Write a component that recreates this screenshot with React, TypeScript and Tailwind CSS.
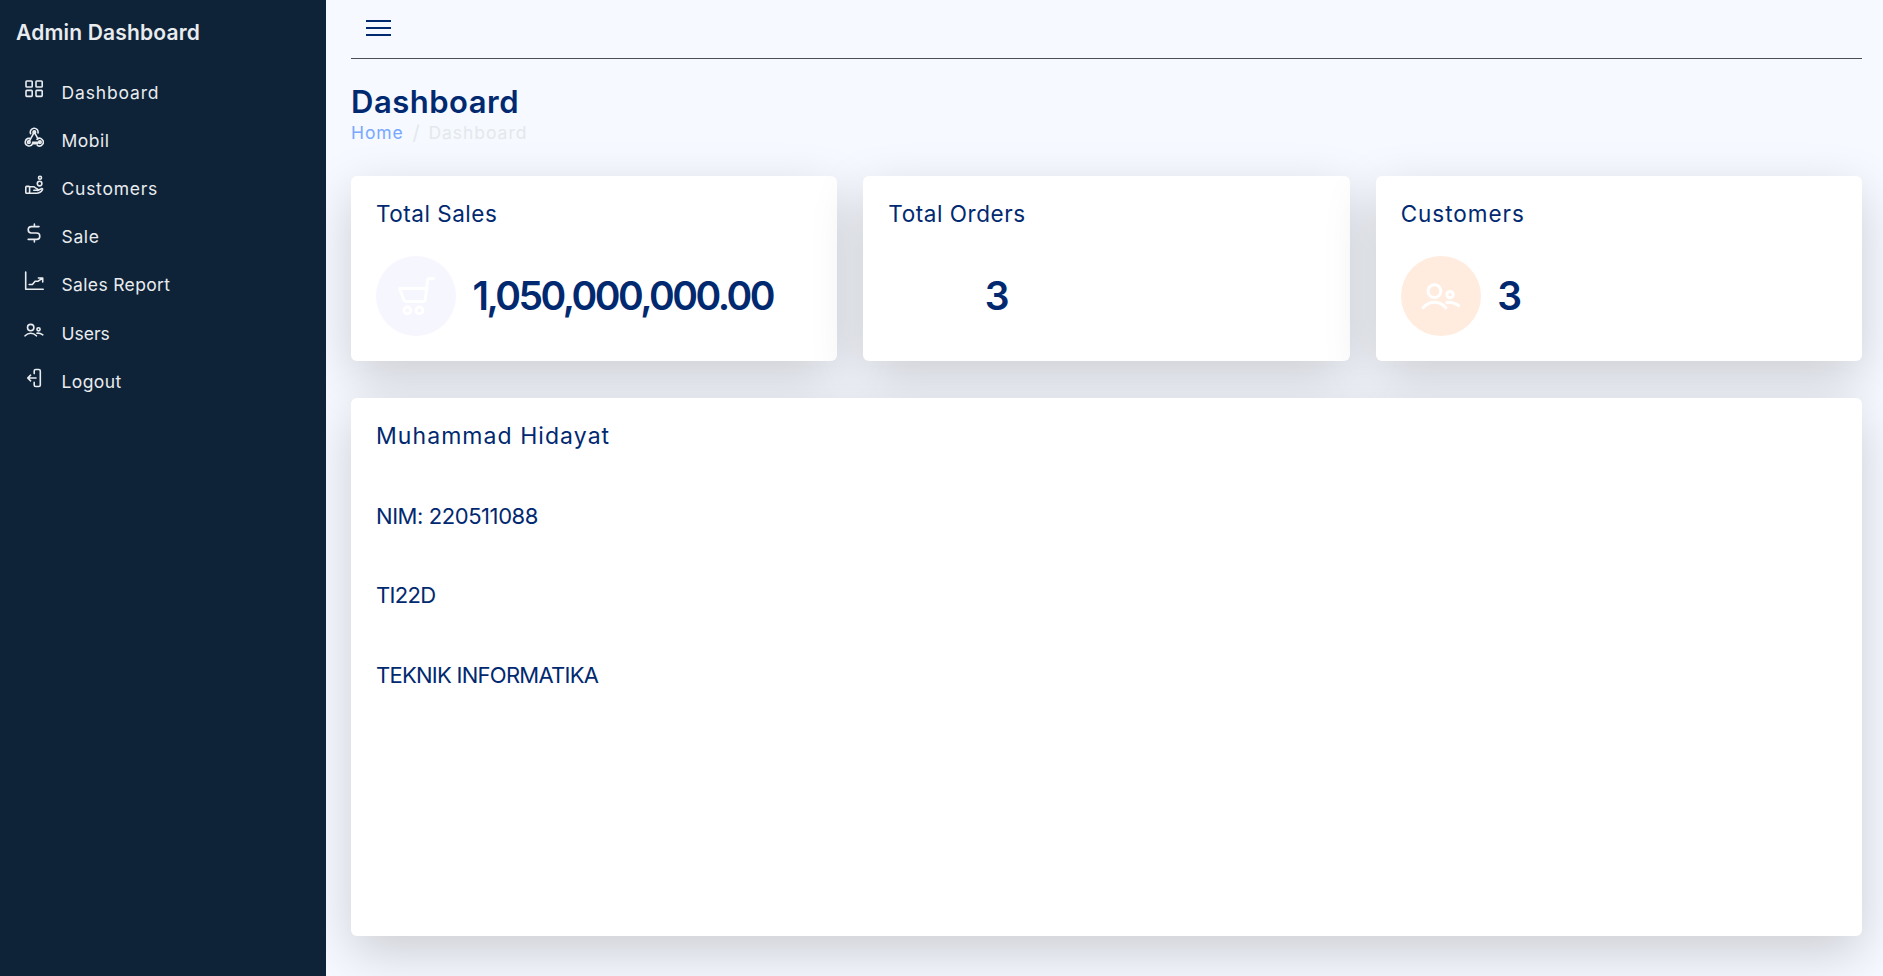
import type { ReactNode } from "react";

function Icon({ size, stroke = 1.4, children }: { size: string; stroke?: number; children: ReactNode }) {
  return (
    <svg
      viewBox="0 0 20 20"
      className={size}
      fill="none"
      stroke="currentColor"
      strokeWidth={stroke}
      strokeLinecap="round"
      strokeLinejoin="round"
      aria-hidden="true"
    >
      {children}
    </svg>
  );
}

const gridIcon = (
  <>
    <rect x="2" y="2" width="6.2" height="6" rx="0.8" />
    <rect x="12" y="2" width="6.2" height="6" rx="0.8" />
    <rect x="2" y="11.4" width="6.2" height="6" rx="0.8" />
    <rect x="12" y="11.4" width="6.2" height="6" rx="0.8" />
  </>
);

const webhookIcon = (
  <>
    <path d="M6.6 6.6a3.9 3.9 0 1 1 7.4-.6M5.6 11.4a3.8 3.8 0 1 0 3 5.2h5M13 12.3a3.8 3.8 0 1 1 .3 6" />
    <path d="M10.3 5.2l-5.5 9.9M10.3 5.2l3.6 6.5M16 15.2H8.6" />
    <circle cx="10.3" cy="5.2" r="1.3" />
    <circle cx="4.8" cy="15.2" r="1.3" />
    <circle cx="15.9" cy="15.2" r="1.3" />
  </>
);

const handCoinsIcon = (
  <>
    <rect x="1.8" y="11.4" width="3.8" height="6.9" rx="0.8" />
    <path d="M5.6 11.8h4c1.4 0 2 1.7 3.4 1.9.9.2.9 1.5-.1 1.5H9.8M5.6 18.2h6.6c3 0 5.2-1.4 6.3-3.6.4-.9-.5-1.2-1.2-.8l-3.6 1.6" />
    <circle cx="15.6" cy="8.6" r="2.3" />
    <circle cx="16" cy="2.8" r="1.5" />
  </>
);

const dollarIcon = (
  <path d="M15 3.6H7.4a3.2 3.2 0 0 0 0 6.4h5.2a3.2 3.2 0 0 1 0 6.4H4.2M10.4 1v2.4M10.4 16.6V19" />
);

const chartIcon = (
  <>
    <path d="M1.7 1v17.3h17.5" />
    <path d="M5.2 13.5h3.2l2.7-3.2h2.8l4.6-3.2M14.4 7h4.3v4" />
  </>
);

const usersIcon = (
  <>
    <circle cx="6.7" cy="7.6" r="3.2" />
    <circle cx="14.5" cy="9.3" r="1.6" />
    <path d="M1.1 15.8c3.2-3.5 8-3.5 11.3 0M12.9 13.2c2.3-.2 4 .3 5.9 1.6" />
  </>
);

const logoutIcon = (
  <path d="M10.2 5.6V3a1.5 1.5 0 0 1 1.5-1.5h3.1A1.5 1.5 0 0 1 16.3 3v14a1.5 1.5 0 0 1-1.5 1.5h-3.1a1.5 1.5 0 0 1-1.5-1.5v-2.6M12 10H3.8M6.6 7.2L3.7 10l2.9 2.8" />
);

const cartIcon = (
  <>
    <path d="M15.5 6.2H1.8L4 12.1c.2.5.4.6.9.6h8.7c.6 0 .9-.3 1-.8l1.2-9.7c.1-.7.3-1 1-1h1.9" />
    <circle cx="5.7" cy="17.2" r="1.7" />
    <circle cx="11.7" cy="17.2" r="1.7" />
  </>
);

const navItems = [
  { label: "Dashboard", icon: gridIcon, tracking: "tracking-[0.85px]" },
  { label: "Mobil", icon: webhookIcon, tracking: "tracking-[0.5px]" },
  { label: "Customers", icon: handCoinsIcon, tracking: "tracking-[0.75px]" },
  { label: "Sale", icon: dollarIcon, tracking: "tracking-[0.65px]" },
  { label: "Sales Report", icon: chartIcon, tracking: "tracking-[0.35px]" },
  { label: "Users", icon: usersIcon, tracking: "tracking-[0px]" },
  { label: "Logout", icon: logoutIcon, tracking: "tracking-[0.4px]" },
];

const profile = [
  { text: "Muhammad Hidayat", style: "text-[23px] tracking-[1.06px]" },
  { text: "NIM: 220511088", style: "text-[22px] tracking-[-0.43px]" },
  { text: "TI22D", style: "text-[22px] tracking-[-0.7px]" },
  { text: "TEKNIK INFORMATIKA", style: "text-[22px] tracking-[-0.73px]" },
];

function StatCard({
  title,
  value,
  tracking,
  valueTracking,
  badge,
}: {
  title: string;
  value: string;
  tracking: string;
  valueTracking: string;
  badge: ReactNode;
}) {
  return (
    <section className="h-[185px] rounded-[6px] bg-white px-[25px] pt-[22px] shadow-[0_17px_51px_rgba(0,0,0,0.175)]">
      <h2 className={`h-[32px] text-[22.5px] leading-[32px] ${tracking}`}>{title}</h2>
      <div className="mt-[26px] flex h-20 items-center">
        {badge}
        <span className={`ml-[16.5px] text-[39px] leading-[48px] font-semibold ${valueTracking}`}>{value}</span>
      </div>
    </section>
  );
}

export default function App() {
  return (
    <div className="flex h-[976px] overflow-hidden bg-[#f6f9ff] font-['Inter','Liberation_Sans',sans-serif] whitespace-nowrap text-[#012970]">
      <aside className="z-10 w-[326px] shrink-0 bg-[#0e2238] text-[#e9ecef]">
        <div className="mb-[3px] flex h-[66px] items-center pl-4 text-[21px] font-semibold tracking-[0.18px]">
          Admin Dashboard
        </div>
        <nav>
          {navItems.map((item) => (
            <a key={item.label} className="flex h-[48.1px] items-center pl-6">
              <span className="mb-[8px]">
                <Icon size="h-5 w-5" stroke={1.6}>{item.icon}</Icon>
              </span>
              <span className={`ml-[17.5px] text-[17.5px] leading-[24px] ${item.tracking}`}>{item.label}</span>
            </a>
          ))}
        </nav>
      </aside>

      <main className="min-w-0 flex-1 pr-[21px] pl-[25px]">
        <header className="flex h-[59px] border-b border-[#4a4f57] pt-5 pl-[15px]">
          <button className="flex h-4 w-[25px] flex-col justify-between" aria-label="Toggle sidebar">
            <span className="h-[2px] w-full bg-[#012970]" />
            <span className="h-[2px] w-full bg-[#012970]" />
            <span className="h-[2px] w-full bg-[#012970]" />
          </button>
        </header>

        <h1 className="mt-[24px] h-[38px] text-[31px] leading-[38px] font-semibold tracking-[0.5px]">Dashboard</h1>
        <div className="flex h-[24px] text-[17.5px] leading-[24px] text-[#e4e8ec]">
          <span className="w-[61.5px] tracking-[0.9px] text-[#78a8ff]">Home</span>
          <span className="w-[16px] text-[20px]">/</span>
          <span className="tracking-[0.95px]">Dashboard</span>
        </div>

        <div className="mt-[31px] grid grid-cols-3 gap-[26px]">
          <StatCard
            title="Total Sales"
            value="1,050,000,000.00"
            tracking="tracking-[0.52px]"
            valueTracking="tracking-[-2.5px]"
            badge={
              <div className="flex h-20 w-20 shrink-0 items-center justify-center rounded-full bg-[#f6f6fe] text-white">
                <Icon size="h-10 w-10" stroke={1.5}>{cartIcon}</Icon>
              </div>
            }
          />
          <StatCard
            title="Total Orders"
            value="3"
            tracking="tracking-[0.56px]"
            valueTracking="tracking-[0px]"
            badge={<div className="h-20 w-20 shrink-0" />}
          />
          <StatCard
            title="Customers"
            value="3"
            tracking="tracking-[0.98px]"
            valueTracking="tracking-[0px]"
            badge={
              <div className="flex h-20 w-20 shrink-0 items-center justify-center rounded-full bg-[#ffecdf] text-white">
                <Icon size="h-10 w-10" stroke={1.5}>{usersIcon}</Icon>
              </div>
            }
          />
        </div>

        <section className="relative mt-[37px] flex h-[538px] flex-col gap-[47.7px] rounded-[6px] bg-white px-[25px] pt-[22px] shadow-[0_17px_51px_rgba(0,0,0,0.175)]">
          {profile.map((line) => (
            <p key={line.text} className={`h-[32px] leading-[32px] ${line.style}`}>
              {line.text}
            </p>
          ))}
        </section>
      </main>
    </div>
  );
}
